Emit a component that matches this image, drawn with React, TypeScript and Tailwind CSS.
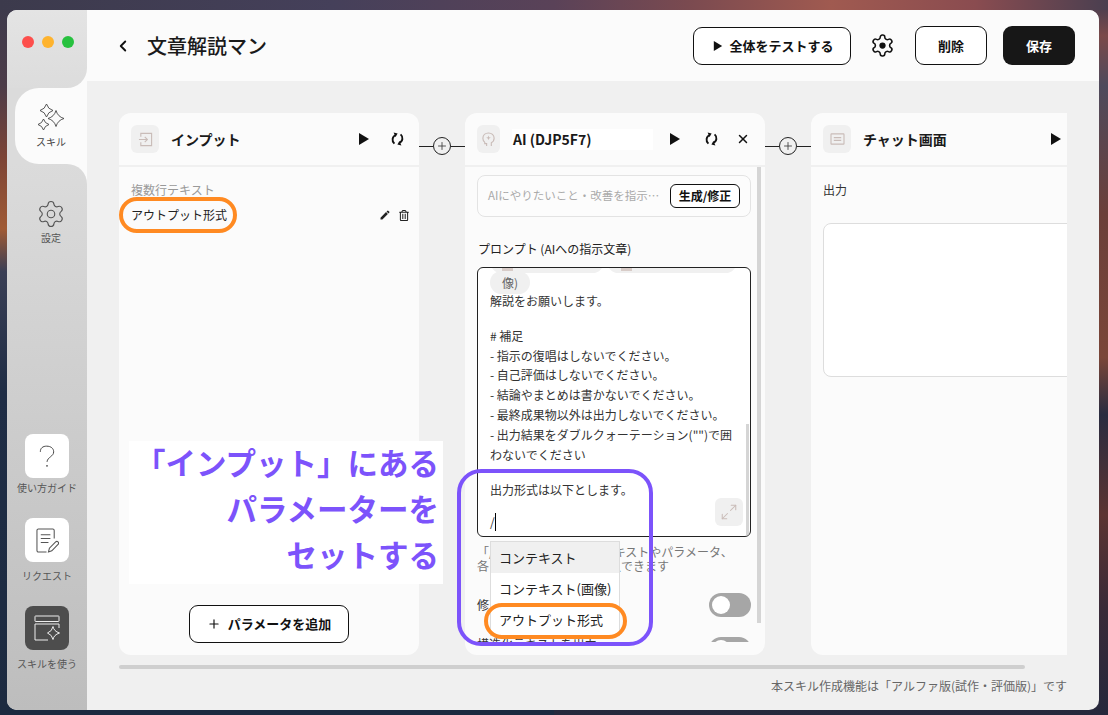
import { ChevronLeft, Maximize2, Plus, Settings, X } from "lucide-react";
import { FaRegTrashAlt } from "react-icons/fa";
import { MdEdit } from "react-icons/md";
import type { ReactNode } from "react";

const FONT = { fontFamily: '"Noto Sans CJK JP", "Noto Sans", sans-serif' };

function Play({ className = "w-[12px] h-[14px]" }: { className?: string }) {
  return (
    <svg viewBox="0 0 12 14" className={className}>
      <path d="M1 1 L11 7 L1 13 Z" fill="#111" />
    </svg>
  );
}

function Sync() {
  return (
    <svg viewBox="0 0 13 14" className="w-[13px] h-[14px]" fill="none" stroke="#111" strokeWidth="1.9">
      <path d="M4.8 3.2 C1.2 4.4 0.4 9 3.4 11.6" />
      <path d="M2.6 0.6 L6.6 1.4 L4.6 5 Z" fill="#111" stroke="none" />
      <path d="M8.2 10.8 C11.8 9.6 12.6 5 9.6 2.4" />
      <path d="M10.4 13.4 L6.4 12.6 L8.4 9 Z" fill="#111" stroke="none" />
    </svg>
  );
}

function HeaderGear() {
  return (
    <svg viewBox="0 0 24 24" className="w-[25px] h-[25px] ml-[19px] text-[#111]" fill="none" stroke="currentColor" strokeWidth="1.5" strokeLinejoin="round">
      <path d="M12.22 2h-.44a2 2 0 0 0-2 2v.18a2 2 0 0 1-1 1.73l-.43.25a2 2 0 0 1-2 0l-.15-.08a2 2 0 0 0-2.73.73l-.22.38a2 2 0 0 0 .73 2.73l.15.1a2 2 0 0 1 1 1.72v.51a2 2 0 0 1-1 1.74l-.15.09a2 2 0 0 0-.73 2.73l.22.38a2 2 0 0 0 2.73.73l.15-.08a2 2 0 0 1 2 0l.43.25a2 2 0 0 1 1 1.73V20a2 2 0 0 0 2 2h.44a2 2 0 0 0 2-2v-.18a2 2 0 0 1 1-1.73l.43-.25a2 2 0 0 1 2 0l.15.08a2 2 0 0 0 2.73-.73l.22-.39a2 2 0 0 0-.73-2.73l-.15-.08a2 2 0 0 1-1-1.74v-.5a2 2 0 0 1 1-1.74l.15-.09a2 2 0 0 0 .73-2.73l-.22-.38a2 2 0 0 0-2.73-.73l-.15.08a2 2 0 0 1-2 0l-.43-.25a2 2 0 0 1-1-1.73V4a2 2 0 0 0-2-2z" />
      <circle cx="12" cy="12" r="3" fill="currentColor" stroke="none" />
    </svg>
  );
}

function Sparkles() {
  const star = (cx: number, cy: number, r: number) =>
    `M${cx} ${cy - r} Q${cx + r * 0.22} ${cy - r * 0.22} ${cx + r} ${cy} Q${cx + r * 0.22} ${cy + r * 0.22} ${cx} ${cy + r} Q${cx - r * 0.22} ${cy + r * 0.22} ${cx - r} ${cy} Q${cx - r * 0.22} ${cy - r * 0.22} ${cx} ${cy - r} Z`;
  return (
    <svg viewBox="0 0 28 28" className="w-[28px] h-[28px]" fill="none" stroke="#444" strokeWidth="0.9">
      <path d={star(9.5, 7.5, 6.5)} />
      <path d={star(19, 15.5, 8)} />
      <path d={star(6.5, 21.5, 5.5)} />
    </svg>
  );
}

function QuestionIcon() {
  return (
    <svg viewBox="0 0 24 34" className="w-[16px] h-[27px]" fill="none" stroke="#444" strokeWidth="1.5">
      <path d="M2 10 C2 4 6 1.5 11.5 1.5 C18 1.5 22 5 22 10 C22 17 13 17.5 12 25" />
      <circle cx="12" cy="31" r="1.3" fill="#444" stroke="none" />
    </svg>
  );
}

function NoteIcon() {
  return (
    <svg viewBox="0 0 24 26" className="w-[23px] h-[25px]" fill="none" stroke="#555" strokeWidth="1.1">
      <path d="M19 11 V2.5 A1.5 1.5 0 0 0 17.5 1 H2.5 A1.5 1.5 0 0 0 1 2.5 V23.5 A1.5 1.5 0 0 0 2.5 25 H11" />
      <path d="M5 7 H15 M5 11 H15 M5 15 H13" />
      <path d="M13 25 L14 21 L20.5 14.5 A1.6 1.6 0 0 1 23 17 L16.5 23.8 Z" />
    </svg>
  );
}

function SkillUseIcon() {
  return (
    <svg viewBox="0 0 26 26" className="w-[26px] h-[26px]" fill="none" stroke="#eee" strokeWidth="1">
      <rect x="1" y="1" width="24" height="5.5" rx="0.5" />
      <path d="M25 13 V9 H1 V25 H14" />
      <path
        d="M19 11.5 Q19.8 16.2 25.5 18 Q19.8 19.8 19 24.5 Q18.2 19.8 13.5 18 Q18.2 16.2 19 11.5 Z"
        fill="#4d4d4d"
      />
    </svg>
  );
}

function InputIcon() {
  return (
    <svg viewBox="0 0 16 16" className="w-[15px] h-[15px]" fill="none" stroke="#c9bcb8" strokeWidth="1.2">
      <path d="M3 5 V1.5 H14.5 V14.5 H3 V11" />
      <path d="M1 8 H10 M7.2 5.2 L10 8 L7.2 10.8" />
    </svg>
  );
}

function HeadIcon() {
  return (
    <svg viewBox="0 0 16 16" className="w-[15px] h-[15px] -scale-x-100" fill="none" stroke="#c9bcb8" strokeWidth="1.2">
      <path d="M5 15 V11.5 C2.8 10.2 2 8.4 2 6.6 C2 3.4 4.6 1 8 1 C11.4 1 14 3.4 14 6.6 C14 9.2 12.6 10.4 12 11 V12.4 H10 V15" />
      <path d="M8 3.8 L8.7 5.6 L10.5 6.2 L8.7 6.9 L8 8.7 L7.3 6.9 L5.5 6.2 L7.3 5.6 Z" fill="#c9bcb8" stroke="none" />
    </svg>
  );
}

function ChatIcon() {
  return (
    <svg viewBox="0 0 16 14" className="w-[15px] h-[13px]" fill="none" stroke="#c9bcb8" strokeWidth="1.2">
      <rect x="1" y="1" width="14" height="11" rx="0.5" />
      <path d="M4 5 H12 M4 8 H12" />
    </svg>
  );
}

function PanelHeader({
  icon,
  tileClass = "w-[28px]",
  title,
  children,
}: {
  icon: ReactNode;
  tileClass?: string;
  title: ReactNode;
  children: ReactNode;
}) {
  return (
    <div className="h-[52px] shrink-0 border-b-2 border-[#f0f0f0] box-content flex items-center pl-[12px]">
      <div className={`${tileClass} h-[28px] rounded-md bg-[#f0f0f0] flex items-center justify-center shrink-0`}>
        {icon}
      </div>
      {title}
      {children}
    </div>
  );
}

function Connector() {
  return (
    <div className="w-[46px] h-[18px] mt-[24px] shrink-0 flex items-center">
      <div className="flex-1 h-px bg-[#222]" />
      <div className="w-[18px] h-[18px] rounded-full border border-[#222] flex items-center justify-center bg-[#f0f0f0]">
        <Plus className="w-[12px] h-[12px] text-[#444]" strokeWidth={1.8} />
      </div>
      <div className="flex-1 h-px bg-[#222]" />
    </div>
  );
}

function Toggle() {
  return (
    <div className="w-[42px] h-[24px] rounded-full bg-[#a6a6a6] flex items-center pl-[3px] shrink-0">
      <div className="w-[18px] h-[18px] rounded-full bg-white" />
    </div>
  );
}

function Sidebar() {
  return (
    <div className="w-[80px] shrink-0 flex flex-col bg-[#fbfbfb]">
      <div className="h-[78px] bg-gradient-to-b from-[#e4e4e4] to-[#dcdcdc] rounded-br-[20px] flex gap-[8px] pt-[26px] pl-[15px]">
        <div className="w-[12px] h-[12px] rounded-full bg-[#fd4f4c]" />
        <div className="w-[12px] h-[12px] rounded-full bg-[#feb32e]" />
        <div className="w-[12px] h-[12px] rounded-full bg-[#27c13f]" />
      </div>
      <div className="h-[76px] bg-[#dbdbdb] pl-[8px]">
        <div className="h-full bg-[#fbfbfb] rounded-l-[24px] flex flex-col items-center pt-[15px]">
          <Sparkles />
          <span className="text-[10px] leading-[14px] text-[#444] mt-[4px]">スキル</span>
        </div>
      </div>
      <div className="flex-1 bg-gradient-to-b from-[#dbdbdb] to-[#bdbdbd] rounded-tr-[20px] flex flex-col items-center">
        <Settings className="w-[30px] h-[30px] text-[#555] mt-[35px] ml-[8px]" strokeWidth={0.9} />
        <span className="text-[10px] leading-[14px] text-[#555] mt-[2px] ml-[8px]">設定</span>
        <div className="w-[44px] h-[44px] mt-[189px] rounded-lg bg-white flex items-center justify-center">
          <QuestionIcon />
        </div>
        <span className="text-[10px] leading-[14px] text-[#555] mt-[3px] whitespace-nowrap">使い方ガイド</span>
        <div className="w-[44px] h-[44px] mt-[23px] rounded-lg bg-white flex items-center justify-center">
          <NoteIcon />
        </div>
        <span className="text-[10px] leading-[14px] text-[#555] mt-[7px] whitespace-nowrap">リクエスト</span>
        <div className="w-[44px] h-[44px] mt-[23px] rounded-lg bg-[#4d4d4d] flex items-center justify-center">
          <SkillUseIcon />
        </div>
        <span className="text-[10px] leading-[14px] text-[#555] mt-[7px] whitespace-nowrap">スキルを使う</span>
      </div>
    </div>
  );
}

function Header() {
  return (
    <div className="h-[71px] shrink-0 bg-[#fbfbfb] flex items-center pl-[27px] pr-[24px]">
      <ChevronLeft className="w-[18px] h-[18px] text-[#111]" strokeWidth={2.5} />
      <h1 className="ml-[15px] text-[20px] font-medium text-[#1a1a1a]">文章解説マン</h1>
      <button className="ml-auto w-[158px] h-[38px] rounded-[9px] border border-[#111] bg-white flex items-center justify-center gap-[6px] pl-[3px] text-[13px] font-bold text-[#111]">
        <Play className="w-[10px] h-[12px]" />
        全体をテストする
      </button>
      <HeaderGear />
      <button className="ml-[20px] w-[72px] h-[39px] rounded-[9px] border border-[#111] bg-white text-[13px] font-bold text-[#111]">
        削除
      </button>
      <button className="ml-[16px] w-[72px] h-[39px] rounded-[9px] bg-[#171717] text-[13px] font-bold text-white">
        保存
      </button>
    </div>
  );
}

function InputPanel() {
  return (
    <div className="w-[300px] shrink-0 bg-[#fbfbfb] rounded-[12px] flex flex-col">
      <PanelHeader
        icon={<InputIcon />}
        title={<span className="ml-[12px] text-[14px] font-bold text-[#1a1a1a]">インプット</span>}
      >
        <div className="ml-auto flex items-center gap-[21px] pr-[15px]">
          <Play />
          <Sync />
        </div>
      </PanelHeader>
      <div className="flex-1 flex flex-col px-[12px]">
        <p className="mt-[14px] text-[12px] leading-[18px] text-[#999]">複数行テキスト</p>
        <div className="mt-[7px] h-[18px] flex items-center">
          <span className="text-[12px] text-[#222]">アウトプット形式</span>
          <div className="ml-auto -mr-[2px] flex items-center gap-[8px]">
            <MdEdit className="w-[12px] h-[12px] text-[#222]" />
            <FaRegTrashAlt className="w-[10px] h-[11px] text-[#222]" />
          </div>
        </div>
        <button className="mt-auto mb-[12px] mx-auto w-[160px] h-[38px] rounded-[9px] border border-[#111] bg-white flex items-center justify-center gap-[7px] text-[13px] font-bold text-[#111]">
          <Plus className="w-[14px] h-[14px]" strokeWidth={2} />
          パラメータを追加
        </button>
      </div>
    </div>
  );
}

function PromptBox() {
  const notes = [
    "- 指示の復唱はしないでください。",
    "- 自己評価はしないでください。",
    "- 結論やまとめは書かないでください。",
    "- 最終成果物以外は出力しないでください。",
    "- 出力結果をダブルクォーテーション(\"\")で囲わないでください",
  ];
  return (
    <div className="relative mt-[9px] h-[270px] rounded-md border border-[#222] bg-white overflow-hidden pl-[12px] pr-[12px] text-[12px] leading-[19.8px] text-[#333]">
      <div className="flex gap-[3px] -mt-[18px] h-[23px]">
        <div className="w-[114px] rounded-full bg-[#f0f0f0] pl-[12px]">
          <div className="w-[11px] h-[21px] bg-[#d8ccc8]" />
        </div>
        <div className="w-[130px] rounded-full bg-[#f0f0f0] pl-[14px]">
          <div className="w-[11px] h-[21px] bg-[#d8ccc8]" />
        </div>
      </div>
      <div className="w-[40px] h-[23px] -mt-[2px] rounded-full bg-[#f0f0f0] text-[#666] flex items-center justify-center">
        像)
      </div>
      <p className="-mt-[3px]">解説をお願いします。</p>
      <p className="mt-[15px]"># 補足</p>
      {notes.map((n) => (
        <p key={n}>{n}</p>
      ))}
      <p className="mt-[16px]">出力形式は以下とします。</p>
      <p className="mt-[12px] flex items-center">
        /<span className="inline-block w-px h-[18px] bg-black" />
      </p>
      <div className="absolute right-[7px] bottom-[10px] w-[28px] h-[28px] rounded-md bg-[#f0f0f0] flex items-center justify-center">
        <Maximize2 className="w-[18px] h-[18px] text-[#c9bcb8]" strokeWidth={1.4} />
      </div>
      <div className="absolute right-[1px] bottom-0 w-[3px] h-[112px] bg-[#d5d5d5]" />
    </div>
  );
}

function AiPanel() {
  return (
    <div className="relative w-[300px] shrink-0 bg-[#fbfbfb] rounded-[12px] flex flex-col">
      <PanelHeader
        icon={<HeadIcon />}
        tileClass="w-[23px]"
        title={
          <span className="ml-[12px] w-[141px] h-[21px] leading-[21px] pl-[1px] bg-white text-[14px] font-bold text-[#1a1a1a]">
            AI (DJP5F7)
          </span>
        }
      >
        <div className="ml-auto flex items-center pr-[15px]">
          <Play />
          <div className="ml-[24px]">
            <Sync />
          </div>
          <X className="ml-[18px] w-[14px] h-[14px] text-[#111]" strokeWidth={2.5} />
        </div>
      </PanelHeader>
      <div className="relative h-[475px] overflow-hidden pl-[12px] pr-[14px] pt-[8px]">
        <div className="h-[42px] rounded-lg border border-[#e3e3e3] bg-[#fcfcfc] flex items-center pl-[10px] pr-[10px]">
          <span className="text-[11.5px] text-[#aaa] whitespace-nowrap">AIにやりたいこと・改善を指示…</span>
          <button className="ml-auto w-[70px] h-[24px] rounded-md border border-[#111] bg-white text-[12px] font-bold text-[#111]">
            生成/修正
          </button>
        </div>
        <p className="mt-[23px] pl-[1px] text-[12px] leading-[18px] text-[#222]">プロンプト (AIへの指示文章)</p>
        <PromptBox />
        <p className="mt-[8px] text-[12px] leading-[14px] text-[#777] whitespace-nowrap">
          「/」を入力するとコンテキストやパラメータ、
          <br />
          各ブロックの出力値を挿入できます
        </p>
        <div className="mt-[20px] flex items-center justify-between text-[12px] text-[#333]">
          <span>修正を有効化</span>
          <Toggle />
        </div>
        <div className="mt-[20px] flex items-start justify-between text-[12px] leading-[14px] text-[#333]">
          <span>構造化テキストを出力</span>
          <Toggle />
        </div>
        <div className="absolute left-[292px] top-0 w-[4px] h-[456px] bg-[#d5d5d5]" />
      </div>
      <div className="absolute left-[25px] top-[428px] w-[130px] border border-[#ddd] bg-white text-[13px] text-[#222]">
        <div className="h-[31px] pl-[8px] flex items-center bg-[#f0f0f0]">コンテキスト</div>
        <div className="h-[31px] pl-[8px] flex items-center">コンテキスト(画像)</div>
        <div className="h-[31px] pl-[8px] flex items-center">アウトプット形式</div>
      </div>
    </div>
  );
}

function ChatPanel() {
  return (
    <div className="w-[300px] shrink-0 bg-[#fbfbfb] rounded-[12px] flex flex-col">
      <PanelHeader
        icon={<ChatIcon />}
        title={<span className="ml-[12px] text-[14px] font-bold text-[#1a1a1a]">チャット画面</span>}
      >
        <div className="ml-[103px]">
          <Play />
        </div>
      </PanelHeader>
      <div className="px-[12px]">
        <p className="mt-[14px] text-[12px] leading-[18px] text-[#333]">出力</p>
        <div className="mt-[24px] h-[154px] rounded-lg border border-[#ddd] bg-white" />
      </div>
    </div>
  );
}

export default function App() {
  return (
    <div
      style={FONT}
      className="relative w-full h-screen overflow-hidden pt-[10px] pl-[7px] pr-[9px] pb-[5px] bg-no-repeat bg-[size:100%_10px,50%_100%,50%_100%] bg-[position:left_top,left_top,right_top] bg-[image:linear-gradient(90deg,#3c3a4c_0%,#45405a_30%,#5a4258_50%,#7a4a50_62%,#a05a50_75%,#8a4c50_88%,#4a3f50_100%),linear-gradient(180deg,#3c3a4c_0%,#4c3c48_12%,#7c4436_22%,#a05a34_32%,#3a3f55_38%,#1f2d45_55%,#1c2a40_100%),linear-gradient(180deg,#433c50_0%,#7a4a4a_5%,#4f4a5c_12%,#6b3f3a_30%,#7a4639_50%,#2a2c40_58%,#5c3432_72%,#3a2a38_85%,#26283c_100%)]"
    >
      <div className="h-full rounded-[10px] overflow-hidden flex">
        <Sidebar />
        <div className="flex-1 min-w-0 flex flex-col bg-[#f0f0f0]">
          <Header />
          <div className="flex-1 px-[32px] pt-[32px]">
            <div className="flex h-[542px] overflow-hidden">
              <InputPanel />
              <Connector />
              <AiPanel />
              <Connector />
              <ChatPanel />
            </div>
            <div className="mt-[10px] w-[906px] h-[4px] rounded-full bg-[#cfcfcf]" />
            <p className="mt-[8px] text-right text-[12px] leading-[18px] text-[#666]">
              本スキル作成機能は「アルファ版(試作・評価版)」です
            </p>
          </div>
        </div>
      </div>

      {/* annotations over the screenshot */}
      <div className="absolute left-[129px] top-[441px] w-[314px] h-[143px] bg-white pr-[4px] text-right text-[30.5px] leading-[46px] font-bold text-[#7c53fb]">
        <p className="-mt-[2px]">「インプット」にある</p>
        <p>パラメーターを</p>
        <p>セットする</p>
      </div>
      <div className="absolute left-[119px] top-[197px] w-[118px] h-[36px] rounded-full border-[4px] border-[#ff8a22]" />
      <div className="absolute left-[457px] top-[469px] w-[196px] h-[177px] rounded-[24px] border-[4px] border-[#7c53fb]" />
      <div className="absolute left-[484px] top-[603px] w-[143px] h-[36px] rounded-full border-[4px] border-[#ff8a22]" />
    </div>
  );
}
